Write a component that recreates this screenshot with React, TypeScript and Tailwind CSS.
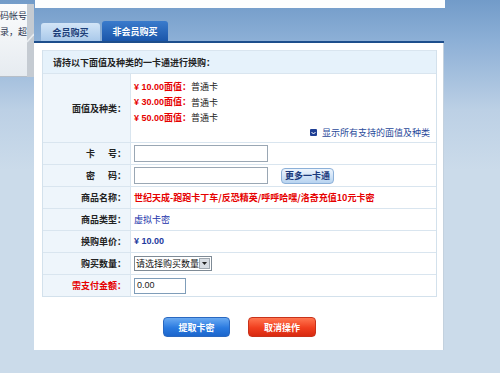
import React from 'react';

const cjk = "font-['SimSun','Noto_Sans_CJK_SC','Noto_Sans',sans-serif]";

interface RowProps {
  label: React.ReactNode;
  labelClass?: string;
  height?: string;
  children?: React.ReactNode;
}

const Row: React.FC<RowProps> = ({ label, labelClass, height = 'h-[22px]', children }) => (
  <div className={`flex border-t border-[#d9e5ef] ${height}`}>
    <div
      className={`w-[88px] shrink-0 bg-[#eef5fb] border-r border-[#d9e5ef] flex items-center justify-end pr-[4px] font-bold ${labelClass ?? 'text-[#222]'}`}
    >
      {label}
    </div>
    <div className="flex-1 flex items-center pl-[3px] bg-white">{children}</div>
  </div>
);

const values = ['10.00', '30.00', '50.00'];

export default function App() {
  return (
    <div
      className={`relative w-[500px] h-[373px] overflow-hidden text-[9px] leading-none bg-[linear-gradient(180deg,#729bc9_0px,#8cafd6_40px,#bcd0e5_110px,#cbdbea_170px,#cbdbea_100%)] ${cjk}`}
    >
      {/* white strip from the box above */}
      <div className="ml-[35px] w-[410px] h-[8px] bg-[#fdfefe]" />

      {/* tabs */}
      <div className="ml-[34px] w-[410px] h-[35px] flex items-end gap-[2px] pl-[7px] border-b-2 border-[#1d4e8c]">
        <div className="w-[59px] h-[18px] rounded-t-[3px] bg-[linear-gradient(180deg,#d3e5f7,#a9c9ea)] flex items-center justify-center font-bold text-[#1b3d78]">
          会员购买
        </div>
        <div className="w-[66px] h-[20px] rounded-t-[3px] bg-[linear-gradient(180deg,#3a7bcc,#1a56aa)] flex items-center justify-center font-bold text-white">
          非会员购买
        </div>
      </div>

      {/* panel */}
      <div className="ml-[34px] w-[410px] h-[307px] bg-white border-r border-[#c3d1de] pt-[7px] pl-[8px]">
        <div className="w-[395px] border border-[#d3e1ec] border-t-0">
          <div className="h-[23px] bg-[#e6f2fb] border-t border-[#d9e5ef] flex items-center pl-[10px] font-bold text-[#222]">
            请持以下面值及种类的一卡通进行换购：
          </div>

          <div className="flex border-t border-[#d9e5ef] h-[69px]">
            <div className="w-[88px] shrink-0 bg-[#eef5fb] border-r border-[#d9e5ef] flex items-center justify-end pr-[4px] font-bold text-[#222]">
              面值及种类：
            </div>
            <div className="flex-1 flex flex-col pl-[3px] pt-[5px]">
              {values.map((v) => (
                <div key={v} className="h-[15.5px] flex items-center">
                  <span className="text-[#e60000] font-bold">
                    <span className="font-['Liberation_Sans',Arial,sans-serif]">¥ {v}</span>面值：
                  </span>
                  <span className="text-[#222]">普通卡</span>
                </div>
              ))}
              <div className="mt-auto mb-[5px] flex items-center justify-end pr-[6px] gap-[5px] text-[#2a4a9a]">
                <span className="w-[7px] h-[7px] rounded-[1px] bg-[#1f3f94] flex items-center justify-center">
                  <svg width="5" height="4" viewBox="0 0 5 4">
                    <path d="M0.5 1 L2.5 3 L4.5 1" stroke="white" strokeWidth="1" fill="none" />
                  </svg>
                </span>
                显示所有支持的面值及种类
              </div>
            </div>
          </div>

          <Row label={<span className="flex w-[40px] justify-between"><span>卡</span><span>号：</span></span>}>
            <div className="w-[134px] h-[17px] border border-[#9aa7b4] bg-white" />
          </Row>
          <Row label={<span className="flex w-[40px] justify-between"><span>密</span><span>码：</span></span>}>
            <div className="w-[134px] h-[17px] border border-[#9aa7b4] bg-white" />
            <div className="ml-[13px] w-[53px] h-[16px] rounded-[4px] border border-[#8cb0d8] bg-[linear-gradient(180deg,#eef5fd,#b7d3f0)] flex items-center justify-center text-[#1b3a7c] font-bold">
              更多一卡通
            </div>
          </Row>
          <Row label="商品名称：">
            <span className="text-[#e60000] font-bold">世纪天成-跑跑卡丁车/反恐精英/呼呼哈嘿/洛奇充值10元卡密</span>
          </Row>
          <Row label="商品类型：">
            <span className="text-[#2233aa]">虚拟卡密</span>
          </Row>
          <Row label="换购单价：">
            <span className="text-[#1e3a9e] font-bold font-['Liberation_Sans',Arial,sans-serif]">¥ 10.00</span>
          </Row>
          <Row label="购买数量：">
            <div className="w-[78px] h-[15px] border border-[#7f8b96] bg-white flex items-center overflow-hidden">
              <span className="flex-1 pl-[1px] text-[#111] whitespace-nowrap">请选择购买数量</span>
              <span className="w-[11px] h-[11px] mr-[1px] shrink-0 bg-[#d8dde3] border border-[#a0a8b0] flex items-center justify-center">
                <svg width="5" height="3" viewBox="0 0 5 3">
                  <path d="M0 0 H5 L2.5 3 Z" fill="#222" />
                </svg>
              </span>
            </div>
          </Row>
          <Row label="需支付金额：" labelClass="text-[#e60000]">
            <div className="w-[52px] h-[16px] border border-[#7f9db9] bg-white flex items-center pl-[2px] text-[#222] font-['Liberation_Sans',Arial,sans-serif]">
              0.00
            </div>
          </Row>
        </div>

        <div className="w-[395px] flex justify-center gap-[18px] mt-[20px]">
          <div className="w-[67px] h-[20px] rounded-[4px] border border-[#2a68c0] bg-[linear-gradient(180deg,#6aaaf2,#2a7ae0_55%,#1c66cc)] flex items-center justify-center text-white font-bold">
            提取卡密
          </div>
          <div className="w-[68px] h-[20px] rounded-[4px] border border-[#c8321a] bg-[linear-gradient(180deg,#ff7650,#f03e1e_55%,#d82a10)] flex items-center justify-center text-white font-bold">
            取消操作
          </div>
        </div>
      </div>

      {/* tooltip bubble at top-left */}
      <div className="absolute left-0 top-[4px] w-[34px] h-[73px] flex">
        <div className="w-[27px] h-full bg-[linear-gradient(180deg,#fbfcfd,#e6ebf0)] border-b border-[#b7bfc8] flex flex-col items-end pt-[7px] gap-[7px] text-[#2b3550] whitespace-nowrap">
          <span>码帐号</span>
          <span>录，超</span>
        </div>
        <div className="relative w-[7px] h-full bg-[#c5cbd2]">
          <svg className="absolute left-0 top-[26px]" width="7" height="14" viewBox="0 0 7 14">
            <path d="M0 12 L7 4" stroke="#e9edf1" strokeWidth="1.5" />
          </svg>
        </div>
      </div>
    </div>
  );
}
